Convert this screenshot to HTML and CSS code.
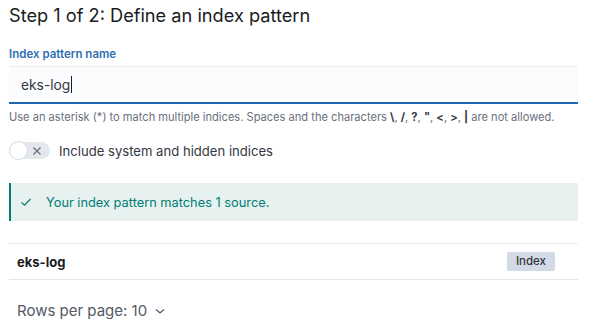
FILE: index.html
```
<html>
    <head>
        <link rel="stylesheet" href="styles.css">
    </head>
    <body>
        <div class="page">
            <h2 class="title">Step 1 of 2: Define an index pattern</h2>

            <div class="field">
                <label class="label">Index pattern name</label>
                <div class="input">eks-log<span class="caret"></span></div>
                <div class="help">Use an asterisk (*) to match multiple indices. Spaces and the characters <b>\</b>, <b>/</b>, <b>?</b>, <b>"</b>, <b>&lt;</b>, <b>&gt;</b>, <b>|</b> are not allowed.</div>
            </div>

            <div class="switch-row">
                <span class="switch">
                    <span class="knob"></span>
                    <svg class="cross" width="10" height="10" viewBox="0 0 10 10"><path d="M1.5 1.5 L8.5 8.5 M8.5 1.5 L1.5 8.5" stroke="#69707d" stroke-width="1.3" fill="none"/></svg>
                </span>
                <span class="switch-label">Include system and hidden indices</span>
            </div>

            <div class="callout">
                <svg width="12" height="12" viewBox="0 0 12 12"><path d="M1.5 6.5 L4.5 9.2 L10.5 3" stroke="#017d73" stroke-width="1.2" fill="none"/></svg>
                <span>Your index pattern matches 1 source.</span>
            </div>

            <div class="table">
                <div class="row">
                    <span class="name">eks-log</span>
                    <span class="badge">Index</span>
                </div>
            </div>

            <div class="pager">
                Rows per page: 10
                <svg width="12" height="12" viewBox="0 0 12 12"><path d="M2 4.5 L6 8 L10 4.5" stroke="#535966" stroke-width="1.2" fill="none"/></svg>
            </div>
        </div>
    </body>
</html>
```
FILE: styles.css
```
body {
    margin: 0;
    background: #fff;
    font-family: Inter, "Noto Sans", sans-serif;
    color: #1a1c21;
}

.page {
    width: 569px;
    padding: 0 9px;
}

.title {
    margin: 0;
    padding-top: 2px;
    font-size: 18.2px;
    font-weight: 400;
    line-height: 26px;
    color: #1a1c21;
}

.field {
    margin-top: 19px;
}

.label {
    display: block;
    font-size: 11.5px;
    font-weight: 600;
    color: #2f6fb4;
    line-height: 14px;
}

.input {
    margin-top: 5px;
    box-sizing: border-box;
    padding: 0 12px;
    display: flex;
    align-items: center;
    font-size: 13.8px;
    color: #343741;
    background: #fbfcfd;
    border-top: 1px solid #e9ecf1;
    border-bottom: 2px solid #1f67ad;
    height: 38px;
}

.caret {
    display: inline-block;
    width: 1px;
    height: 17px;
    background: #1a1c21;
    margin-left: 1px;
}

.help {
    margin-top: 6px;
    font-size: 11.1px;
    color: #69707d;
    line-height: 14px;
    white-space: nowrap;
}

.help b {
    color: #343741;
    font-weight: 700;
}

.switch-row {
    margin-top: 18px;
    display: flex;
    align-items: center;
    gap: 9px;
}

.switch {
    position: relative;
    width: 41px;
    height: 17px;
    border-radius: 9px;
    background: #e4e7ec;
    display: flex;
    align-items: center;
    justify-content: flex-end;
    padding-right: 8px;
    box-sizing: border-box;
}

.knob {
    position: absolute;
    left: 0;
    top: -1px;
    width: 17px;
    height: 17px;
    border-radius: 50%;
    background: #fff;
    border: 1px solid #d3dae6;
}

.switch-label {
    font-size: 13.1px;
    color: #343741;
}

.callout {
    margin-top: 24px;
    height: 38px;
    box-sizing: border-box;
    background: #e6f1f0;
    border-left: 2px solid #017d73;
    display: flex;
    align-items: center;
    gap: 14px;
    padding-left: 9px;
    font-size: 12.8px;
    color: #017d73;
}

.table {
    margin-top: 22px;
    border-top: 1px solid #e9ecf1;
    border-bottom: 1px solid #e3e6eb;
}

.row {
    height: 35px;
    display: flex;
    align-items: center;
    justify-content: space-between;
    padding: 0 23px 0 8px;
}

.name {
    font-size: 13px;
    font-weight: 700;
    color: #1a1c21;
}

.badge {
    background: #d3dae6;
    color: #343741;
    font-size: 11.5px;
    font-weight: 500;
    padding: 2px 9px;
    border-radius: 2px;
    line-height: 15px;
}

.pager {
    margin-top: 21px;
    padding-left: 8px;
    display: flex;
    align-items: center;
    gap: 7px;
    font-size: 15px;
    color: #535966;
}
```
